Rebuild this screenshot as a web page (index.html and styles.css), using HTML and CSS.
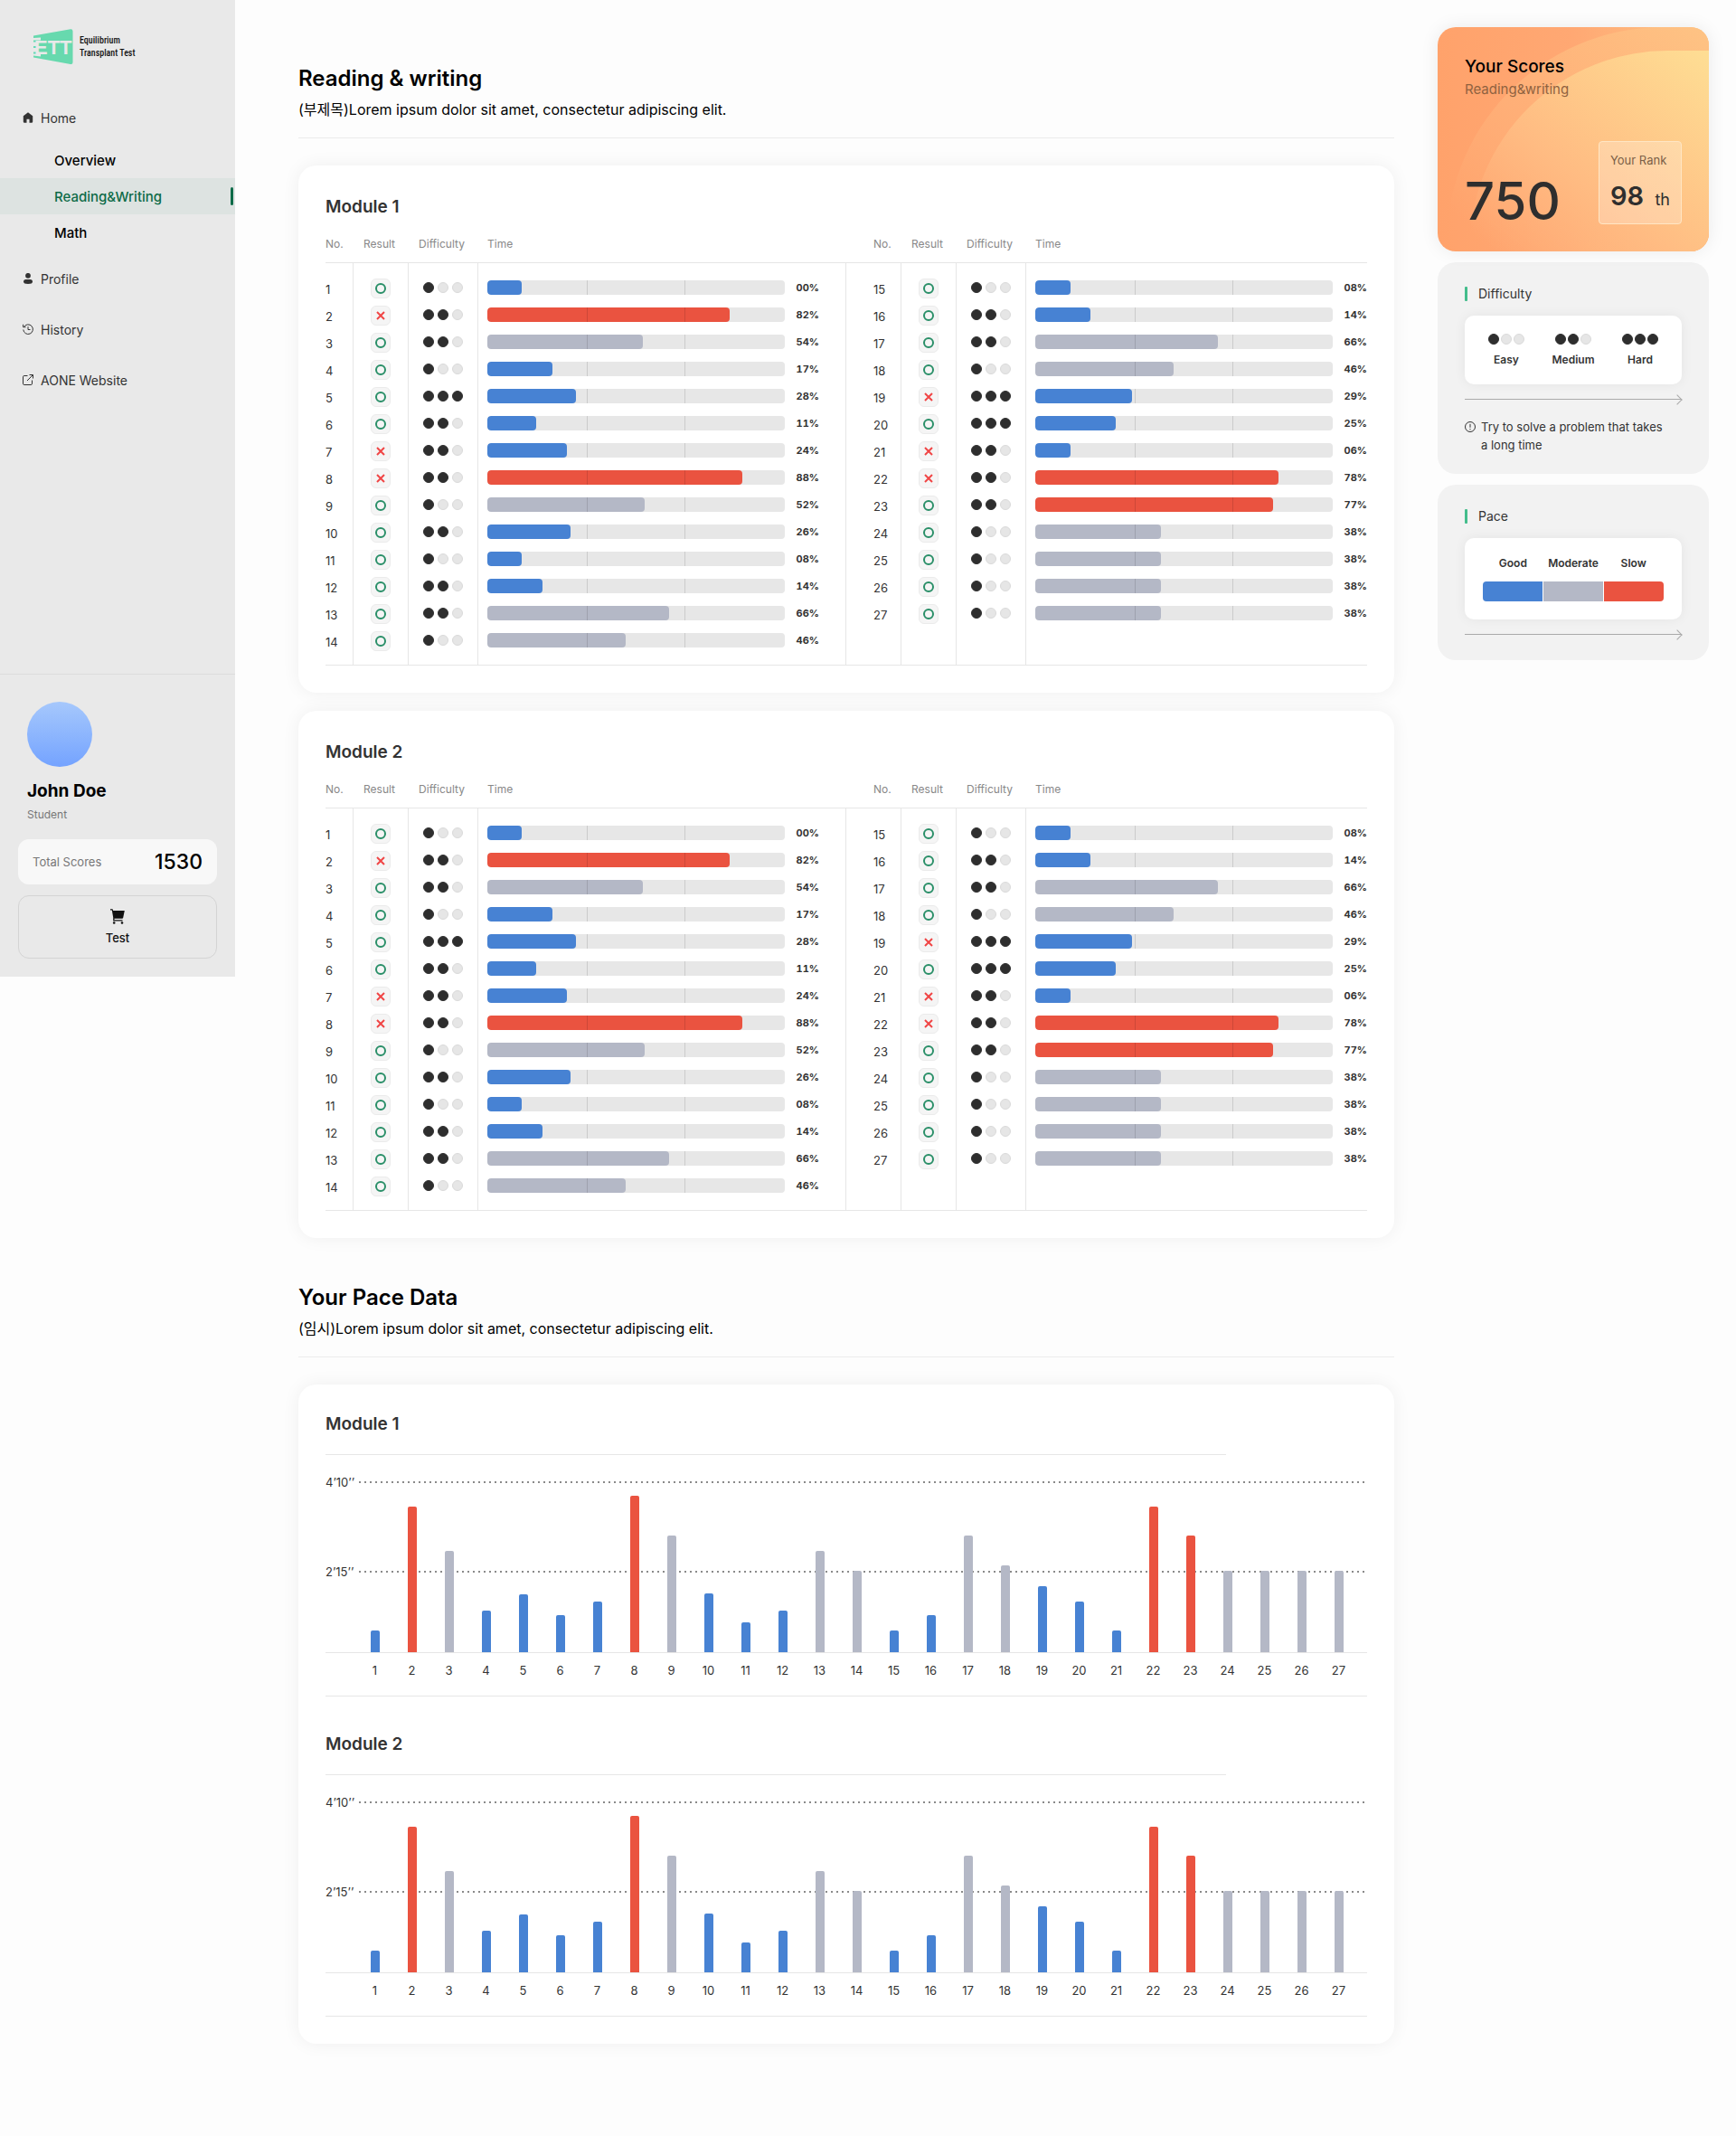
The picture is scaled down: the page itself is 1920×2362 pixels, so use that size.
FILE: index.html
```html
<!DOCTYPE html>
<html lang="ko">
<head>
    <meta charset="UTF-8">
    <meta name="viewport" content="width=device-width, initial-scale=1.0">
    <title>Reading &amp; writing</title>
    <link rel="stylesheet" href="styles.css">
</head>
<body>
    <aside class="sidebar">
        <a class="logo" href="#">
            <svg width="44" height="40" viewBox="0 0 44 40" aria-hidden="true">
                <path class="logo-shape" d="M0 7.500 41 0.200Q43.500 0 43.500 2.500V37Q43.500 39.500 41 39L0 31.500V29.500L8 30.500V27.500H0V25.500H3V21H0V19H3V14.500H0V12.500H8V9.500L0 10Z"/>
                <text class="logo-text" x="1" y="28">ETT</text>
            </svg>
            <span class="logo-name">Equilibrium<br>Transplant Test</span>
        </a>
        <nav class="nav">
            <a class="nav-item" href="#">
                <svg width="12" height="12" viewBox="0 0 12 12"><path fill="#333" d="M6 .3 .8 4.300V10.500Q.8 11.700 2 11.700H4.500V7.800H7.500V11.700H10Q11.200 11.700 11.200 10.500V4.300Z"/></svg>
                Home
            </a>
            <div class="sub-nav">
                <a class="sub-item" href="#">Overview</a>
                <a class="sub-item active" href="#">Reading&amp;Writing</a>
                <a class="sub-item" href="#">Math</a>
            </div>
            <a class="nav-item" href="#">
                <svg width="12" height="12" viewBox="0 0 12 12"><circle cx="6" cy="2.800" r="2.900" fill="#333"/><path fill="#333" d="M1 9.500Q1 7 3.500 7H8.500Q11 7 11 9.500Q11 12 6 12T1 9.500Z"/></svg>
                Profile
            </a>
            <a class="nav-item" href="#">
                <svg width="12" height="12" viewBox="0 0 12 12" fill="none" stroke="#333"><path d="M1.500 3.500A5.300 5.300 0 1 1 .8 6.500M.6 .8V3.700H3.500M6 3.200V6.500H8.500"/></svg>
                History
            </a>
            <a class="nav-item" href="#">
                <svg width="12" height="12" viewBox="0 0 12 12" fill="none" stroke="#333"><path d="M5.500 1.500H1.800Q.5 1.500 .5 2.800V10.200Q.5 11.500 1.800 11.500H9.200Q10.500 11.500 10.500 10.200V6.500M7.500 .5H11.500V4.500M11.300 .7 5 7"/></svg>
                AONE Website
            </a>
        </nav>
        <div class="profile">
            <div class="avatar"></div>
            <div class="profile-name">John Doe</div>
            <div class="profile-role">Student</div>
            <div class="total">
                <span>Total Scores</span>
                <strong>1530</strong>
            </div>
            <button class="test-btn" type="button">
                <svg width="16" height="17" viewBox="0 0 16 17"><path fill="#111" d="M0 .3H2.500L3.200 2H15.800L14.200 9.800Q14 10.800 13 10.800H4.500V12.300H13.500V13.500H3.200V9.500L1.800 1.500H0Z"/><circle cx="4.200" cy="15.500" r="1.300" fill="#111"/><circle cx="13" cy="15.500" r="1.300" fill="#111"/></svg>
                Test
            </button>
        </div>
    </aside>

    <main class="content">
        <header class="section-head">
            <h1>Reading &amp; writing</h1>
            <p>(부제목)Lorem ipsum dolor sit amet, consectetur adipiscing elit.</p>
        </header>
        <section class="card">
            <h2>Module 1</h2>
            <div class="tables"></div>
        </section>
        <section class="card">
            <h2>Module 2</h2>
            <div class="tables"></div>
        </section>

        <header class="section-head">
            <h1>Your Pace Data</h1>
            <p>(임시)Lorem ipsum dolor sit amet, consectetur adipiscing elit.</p>
        </header>
        <section class="card chart-card">
            <div class="chart-block">
                <h2>Module 1</h2>
                <div class="chart"></div>
            </div>
            <div class="chart-block">
                <h2>Module 2</h2>
                <div class="chart"></div>
            </div>
        </section>
    </main>

    <aside class="side">
        <section class="score-card">
            <svg class="score-bg" viewBox="0 0 300 248" preserveAspectRatio="none" aria-hidden="true">
                <defs>
                    <linearGradient id="outer" x1="0" y1="1" x2="1" y2="0">
                        <stop offset="0.100" stop-color="#ffb27a" stop-opacity="0"/>
                        <stop offset="0.500" stop-color="#ffb078"/>
                        <stop offset="1" stop-color="#fec384"/>
                    </linearGradient>
                    <linearGradient id="inner" x1="0" y1="1" x2="1" y2="0">
                        <stop offset="0.050" stop-color="#ffb27c" stop-opacity="0"/>
                        <stop offset="0.400" stop-color="#ffbb82"/>
                        <stop offset="1" stop-color="#fede94"/>
                    </linearGradient>
                </defs>
                <path fill="url(#outer)" d="M10 248A240 240 0 0 1 250 0H300V248Z"/>
                <path fill="url(#inner)" d="M35 248A220 220 0 0 1 260 26H300V248Z"/>
            </svg>
            <div class="score-title">Your Scores</div>
            <div class="score-sub">Reading&amp;writing</div>
            <div class="score-row">
                <div class="score-value">750</div>
                <div class="rank">
                    <span class="rank-label">Your Rank</span>
                    <div class="rank-value"><strong>98</strong> <span>th</span></div>
                </div>
            </div>
        </section>

        <section class="legend">
            <h3>Difficulty</h3>
            <div class="legend-box levels">
                <div class="level"><span class="dots"><i class="on"></i><i></i><i></i></span>Easy</div>
                <div class="level"><span class="dots"><i class="on"></i><i class="on"></i><i></i></span>Medium</div>
                <div class="level"><span class="dots"><i class="on"></i><i class="on"></i><i class="on"></i></span>Hard</div>
            </div>
            <div class="arrow"></div>
            <div class="note">
                <svg width="12" height="12" viewBox="0 0 12 12" fill="none" stroke="#333"><circle cx="6" cy="6" r="5.500"/><path d="M6 2.800V6.800M6 8V9.200"/></svg>
                <p>Try to solve a problem that takes a long time</p>
            </div>
        </section>

        <section class="legend">
            <h3>Pace</h3>
            <div class="legend-box">
                <div class="pace-labels"><span>Good</span><span>Moderate</span><span>Slow</span></div>
                <div class="pace-bar"><i class="good"></i><i class="moderate"></i><i class="slow"></i></div>
            </div>
            <div class="arrow"></div>
        </section>
    </aside>
    <script src="script.js"></script>
</body>
</html>
```

FILE: styles.css
```css
* {
    box-sizing: border-box;
}

body {
    display: flex;
    align-items: flex-start;
    margin: 0;
    background: #fdfdfd;
    color: #333;
    font-family: Inter, "Noto Sans CJK KR", sans-serif;
    font-size: 14px;
}

h1, h2, h3, p {
    margin: 0;
}

a {
    color: inherit;
    text-decoration: none;
}

/* Sidebar */
.sidebar {
    display: flex;
    flex-direction: column;
    flex: none;
    width: 260px;
    height: 1080px;
    background: #e9e9e9;
}

.logo {
    display: flex;
    align-items: center;
    gap: 7px;
    padding: 32px 37px 30px;
    color: #111;
}

.logo-shape {
    fill: #67d9ae;
}

.logo-text {
    fill: #e9e9e9;
    font-family: "Liberation Sans", sans-serif;
    font-size: 22px;
    font-weight: 700;
}

.logo-name {
    font-family: "Liberation Sans Narrow", "Roboto Condensed", Roboto, sans-serif;
    font-size: 10px;
    font-weight: 500;
    line-height: 14px;
    white-space: nowrap;
}

.nav-item {
    display: flex;
    align-items: center;
    gap: 8px;
    height: 56px;
    padding-left: 25px;
}

.sub-nav {
    margin: -1px 0 3px;
}

.sub-item {
    display: flex;
    align-items: center;
    justify-content: space-between;
    height: 40px;
    padding: 0 2px 0 60px;
    color: #000;
    font-size: 15px;
    font-weight: 500;
}

.sub-item.active {
    background: #dde3e1;
    color: #0d6b48;
}

.sub-item.active::after {
    content: "";
    width: 3px;
    height: 20px;
    border-radius: 2px;
    background: #0d6b48;
}

.profile {
    margin-top: auto;
    padding: 30px 20px 20px;
    border-top: 1px solid #dcdcdc;
}

.avatar {
    width: 72px;
    height: 72px;
    margin: 0 10px 14px;
    border-radius: 50%;
    background: linear-gradient(#a6c8fc, #74a3ff);
}

.profile-name {
    padding: 0 10px;
    color: #000;
    font-size: 19px;
    font-weight: 700;
    line-height: 26px;
}

.profile-role {
    margin: 3px 0 17px;
    padding: 0 10px;
    color: #777;
    font-size: 12px;
    line-height: 20px;
}

.total {
    display: flex;
    align-items: center;
    justify-content: space-between;
    height: 50px;
    padding: 0 16px;
    border-radius: 12px;
    background: #f8f8f8;
    color: #777;
    font-size: 13px;
}

.total strong {
    color: #000;
    font-size: 23px;
    font-weight: 500;
}

.test-btn {
    display: flex;
    flex-direction: column;
    align-items: center;
    justify-content: center;
    gap: 7px;
    width: 100%;
    height: 70px;
    margin-top: 12px;
    border: 1px solid #d4d4d4;
    border-radius: 12px;
    background: none;
    color: #111;
    font-family: inherit;
    font-size: 13px;
    font-weight: 500;
    cursor: pointer;
}

/* Content */
.content {
    flex: 1;
    padding: 69px 48px 100px 70px;
}

.section-head {
    margin-bottom: 30px;
    padding-bottom: 19px;
    border-bottom: 1px solid #ececec;
    color: #000;
}

.section-head h1 {
    margin-bottom: 4px;
    font-size: 24px;
    font-weight: 600;
    line-height: 36px;
}

.section-head p {
    font-size: 16px;
    line-height: 24px;
}

.card + .section-head {
    margin-top: 48px;
}

.card {
    padding: 30px;
    border-radius: 20px;
    background: #fff;
    box-shadow: 0 0 20px rgba(0, 0, 0, 0.06);
}

.card + .card {
    margin-top: 20px;
}

.card h2 {
    font-size: 19px;
    font-weight: 600;
    line-height: 32px;
}

.tables {
    display: grid;
    grid-template-columns: 1fr 1fr;
}

table {
    width: 100%;
    table-layout: fixed;
    border-collapse: separate;
    border-spacing: 0;
}

th {
    height: 46px;
    padding: 4px 4px 0 0;
    border-bottom: 1px solid #e6e6e6;
    color: #888;
    font-size: 12px;
    font-weight: 400;
}

td {
    height: 30px;
    padding: 0;
    border-right: 1px solid #e6e6e6;
    text-align: center;
}

tbody tr:first-child td {
    height: 42px;
    padding-top: 12px;
}

tbody tr:last-child td {
    height: 43px;
    padding-bottom: 12px;
    border-bottom: 1px solid #e6e6e6;
}

.col-no {
    width: 31px;
}

.col-result {
    width: 61px;
}

.col-level {
    width: 77px;
}

.no {
    text-align: left;
}

th.no {
    padding-right: 0;
}

td.no {
    padding-top: 4px;
    font-size: 13px;
    line-height: 16px;
}

tbody tr:first-child td.no {
    padding-top: 16px;
}

.time {
    padding-left: 10px;
    text-align: left;
}

td.time {
    padding-right: 29px;
}

.tables table:last-child .col-no {
    width: 61px;
}

.tables table:last-child .no {
    padding-left: 30px;
}

.tables table:last-child td.time {
    padding-right: 0;
    border-right: 0;
}

.result {
    display: block;
    width: 22px;
    height: 22px;
    margin: 2px auto 0;
    border: 1px solid #ebebeb;
    border-radius: 6px;
    background: #f5f5f5;
    fill: none;
    stroke: #2a8f68;
    stroke-width: 2;
}

.result.wrong {
    stroke: #f04545;
}

.dots {
    display: flex;
    justify-content: center;
    gap: 4px;
}

.dots i {
    width: 12px;
    height: 12px;
    border: 1px solid #dadada;
    border-radius: 50%;
    background: #e6e6e6;
}

.dots .on {
    border-color: #2e2e2e;
    background: #2e2e2e;
}

.meter {
    display: flex;
    align-items: center;
    gap: 12px;
    font-size: 11px;
    font-variant-numeric: tabular-nums;
    font-weight: 700;
}

.meter span {
    width: 26px;
    text-align: right;
}

.track {
    position: relative;
    flex: 1;
    height: 16px;
    overflow: hidden;
    border-radius: 4px;
    background: #e7e7e7;
}

.track i {
    display: block;
    height: 100%;
    border-radius: 4px;
}

/* third marks over the filled part */
.track::after {
    content: "";
    position: absolute;
    inset: 0 33.33%;
    border: solid rgba(0, 0, 0, 0.12);
    border-width: 0 1px;
}

.good {
    background: #4782d3;
}

.moderate {
    background: #b4b8c6;
}

.slow {
    background: #ea5340;
}

/* Pace charts */
.chart-card {
    padding-top: 28px;
}

.chart-block + .chart-block {
    padding-top: 37px;
}

.chart-block h2::after {
    content: "";
    display: block;
    width: 996px;
    max-width: 100%;
    height: 1px;
    margin-top: 17px;
    background: #e6e6e6;
}

.chart {
    padding-top: 30px;
    border-bottom: 1px solid #e6e6e6;
}

.plot {
    position: relative;
    height: 189px;
    border-bottom: 1px solid #e6e6e6;
}

.guide {
    position: absolute;
    left: 0;
    right: 0;
    bottom: 188px;
    display: flex;
    align-items: center;
    height: 16px;
    margin-bottom: -8px;
    font-size: 13px;
}

.guide.mid {
    bottom: 89px;
}

.guide span {
    width: 37px;
    white-space: nowrap;
}

.guide::after {
    content: "";
    flex: 1;
    height: 2px;
    background: repeating-linear-gradient(90deg, #8a8a8a 0 2px, transparent 2px 6px);
}

.bars, .ticks {
    display: flex;
    padding: 0 11px 0 34px;
}

.bars {
    position: relative;
    align-items: flex-end;
    height: 100%;
}

.bars div, .ticks span {
    flex: 1;
    text-align: center;
}

.bars i {
    display: block;
    width: 10px;
    margin: 0 auto;
    border-radius: 2px 2px 0 0;
}

.ticks {
    padding-top: 11px;
    padding-bottom: 20px;
    font-size: 13px;
    line-height: 16px;
}

/* Right column */
.side {
    display: flex;
    flex-direction: column;
    flex: none;
    gap: 12px;
    width: 330px;
    padding: 30px 30px 30px 0;
}

.score-card {
    position: relative;
    overflow: hidden;
    padding: 30px;
    border-radius: 20px;
    background: linear-gradient(90deg, #ffa26b, #ffa873 50%, #fec484);
    box-shadow: 0 0 20px rgba(0, 0, 0, 0.08);
}

.score-bg {
    position: absolute;
    inset: 0;
    width: 100%;
    height: 100%;
}

.score-title, .score-sub, .score-row {
    position: relative;
}

.score-title {
    color: #000;
    font-size: 19px;
    font-weight: 500;
    line-height: 28px;
}

.score-sub {
    color: #8f6240;
    font-size: 15px;
    line-height: 22px;
}

.score-row {
    display: flex;
    align-items: flex-end;
    justify-content: space-between;
    margin-top: 46px;
}

.score-value {
    color: #2e2e2e;
    font-size: 58px;
    font-weight: 500;
    line-height: 52px;
}

.rank {
    display: flex;
    flex-direction: column;
    justify-content: space-between;
    width: 92px;
    height: 92px;
    padding: 12px 12px 10px;
    border: 1px solid #ffe6c4;
    border-radius: 4px;
    background: rgba(255, 255, 255, 0.25);
    white-space: nowrap;
}

.rank-label {
    color: #7a5f47;
    font-size: 13px;
}

.rank-value {
    display: flex;
    align-items: baseline;
    justify-content: space-between;
    color: #2e2e2e;
    font-size: 18px;
    line-height: 32px;
}

.rank-value strong {
    font-size: 29px;
    font-weight: 600;
}

.legend {
    padding: 25px 30px 22px;
    border-radius: 20px;
    background: #f2f2f2;
}

.legend h3 {
    display: flex;
    align-items: center;
    gap: 12px;
    margin-bottom: 14px;
    font-size: 14px;
    font-weight: 400;
    line-height: 20px;
}

.legend h3::before {
    content: "";
    width: 3px;
    height: 16px;
    border-radius: 1px;
    background: #44bd8c;
}

.legend-box {
    padding: 20px;
    border-radius: 10px;
    background: #fff;
    box-shadow: 0 0 14px rgba(0, 0, 0, 0.06);
    font-size: 12px;
    font-weight: 600;
    line-height: 16px;
}

.levels {
    display: flex;
    padding: 20px 9px 19px;
}

.level {
    flex: 1;
    text-align: center;
}

.level .dots {
    gap: 2px;
    margin-bottom: 9px;
}

.pace-labels {
    display: flex;
    margin-bottom: 12px;
}

.pace-labels span {
    flex: 1;
    text-align: center;
}

.pace-bar {
    display: flex;
    gap: 1px;
    height: 22px;
    overflow: hidden;
    border-radius: 4px;
}

.pace-bar i {
    flex: 1;
}

.arrow {
    position: relative;
    height: 1px;
    margin: 16px 0 6px;
    background: #aaa;
}

.arrow::after {
    content: "";
    position: absolute;
    top: -3px;
    right: 1px;
    width: 7px;
    height: 7px;
    border: solid #aaa;
    border-width: 1px 1px 0 0;
    transform: rotate(45deg);
}

.note {
    display: flex;
    gap: 6px;
    margin-top: 20px;
    padding-right: 12px;
    font-size: 13px;
    line-height: 20px;
}

.note svg {
    flex: none;
    margin-top: 4px;
}
```

FILE: script.js
```js
// [result, difficulty, pace, bar width %, label, chart height px]
const questions = [
    ['O', 1, 'good', 11.6, '00%', 24],
    ['X', 2, 'slow', 81.4, '82%', 161],
    ['O', 2, 'moderate', 52.2, '54%', 112],
    ['O', 1, 'good', 22, '17%', 46],
    ['O', 3, 'good', 29.8, '28%', 64],
    ['O', 2, 'good', 16.5, '11%', 41],
    ['X', 2, 'good', 26.6, '24%', 56],
    ['X', 2, 'slow', 85.6, '88%', 173],
    ['O', 1, 'moderate', 53, '52%', 129],
    ['O', 2, 'good', 28, '26%', 65],
    ['O', 1, 'good', 11.6, '08%', 33],
    ['O', 2, 'good', 18.5, '14%', 46],
    ['O', 2, 'moderate', 61, '66%', 112],
    ['O', 1, 'moderate', 46.4, '46%', 90],
    ['O', 1, 'good', 11.9, '08%', 24],
    ['O', 2, 'good', 18.6, '14%', 41],
    ['O', 2, 'moderate', 61.4, '66%', 129],
    ['O', 1, 'moderate', 46.5, '46%', 96],
    ['X', 3, 'good', 32.5, '29%', 73],
    ['O', 3, 'good', 27, '25%', 56],
    ['X', 2, 'good', 11.9, '06%', 24],
    ['X', 2, 'slow', 81.9, '78%', 161],
    ['O', 2, 'slow', 80, '77%', 129],
    ['O', 1, 'moderate', 42.4, '38%', 90],
    ['O', 1, 'moderate', 42.4, '38%', 90],
    ['O', 1, 'moderate', 42.4, '38%', 90],
    ['O', 1, 'moderate', 42.4, '38%', 90]
];

const ROWS = 14;

function resultIcon(result) {
    if (result === 'O') {
        return '<svg class="result" viewBox="0 0 20 20" role="img" aria-label="O"><circle cx="10" cy="10" r="5"/></svg>';
    }
    return '<svg class="result wrong" viewBox="0 0 20 20" role="img" aria-label="X"><path d="M6 6 14 14M14 6 6 14"/></svg>';
}

function dots(level) {
    return '<span class="dots">' + [1, 2, 3].map(n => `<i class="${n <= level ? 'on' : ''}"></i>`).join('') + '</span>';
}

function row(index) {
    const q = questions[index];
    if (!q) {
        return '<tr><td></td><td></td><td></td><td class="time"></td></tr>';
    }
    return `<tr>
        <td class="no">${index + 1}</td>
        <td>${resultIcon(q[0])}</td>
        <td>${dots(q[1])}</td>
        <td class="time"><div class="meter"><div class="track"><i class="${q[2]}" style="width: ${q[3]}%"></i></div><span>${q[4]}</span></div></td>
    </tr>`;
}

function table(start) {
    let rows = '';
    for (let i = start; i < start + ROWS; i++) {
        rows += row(i);
    }
    return `<table>
        <thead><tr><th class="no col-no">No.</th><th class="col-result">Result</th><th class="col-level">Difficulty</th><th class="time">Time</th></tr></thead>
        <tbody>${rows}</tbody>
    </table>`;
}

document.querySelectorAll('.tables').forEach(el => {
    el.innerHTML = table(0) + table(ROWS);
});

document.querySelectorAll('.chart').forEach(el => {
    el.innerHTML = `<div class="plot">
        <div class="guide"><span>4’10’’</span></div>
        <div class="guide mid"><span>2’15’’</span></div>
        <div class="bars">${questions.map(q => `<div><i class="${q[2]}" style="height: ${q[5]}px"></i></div>`).join('')}</div>
    </div>
    <div class="ticks">${questions.map((q, i) => `<span>${i + 1}</span>`).join('')}</div>`;
});
```
